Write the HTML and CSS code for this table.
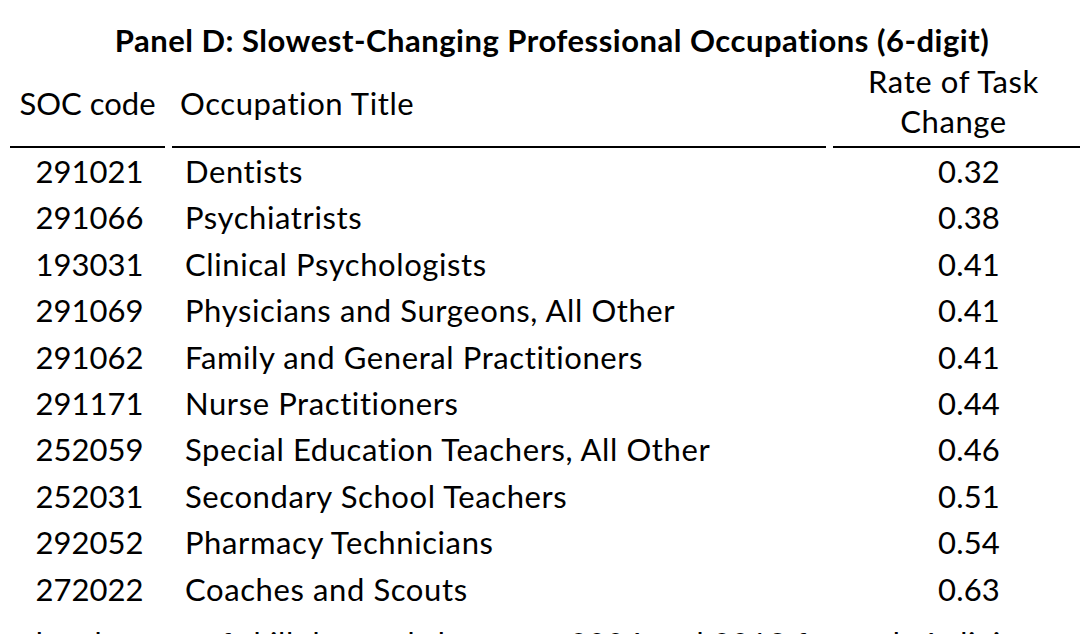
FILE: index.html
```html
<!DOCTYPE html>
<html lang="en">
<head>
<meta charset="utf-8">
<title>Panel D</title>
<link rel="stylesheet" href="styles.css">
</head>
<body>
<div class="panel">
  <h1 class="title">Panel D: Slowest-Changing Professional Occupations (6-digit)</h1>
  <div class="table">
    <div class="th th-code"><span>SOC code</span></div>
    <div class="th th-title"><span>Occupation Title</span></div>
    <div class="th th-rate"><span>Rate of Task</span><span>Change</span></div>

    <div class="td code">291021</div><div class="td name">Dentists</div><div class="td rate">0.32</div>
    <div class="td code">291066</div><div class="td name">Psychiatrists</div><div class="td rate">0.38</div>
    <div class="td code">193031</div><div class="td name">Clinical Psychologists</div><div class="td rate">0.41</div>
    <div class="td code">291069</div><div class="td name">Physicians and Surgeons, All Other</div><div class="td rate">0.41</div>
    <div class="td code">291062</div><div class="td name">Family and General Practitioners</div><div class="td rate">0.41</div>
    <div class="td code">291171</div><div class="td name">Nurse Practitioners</div><div class="td rate">0.44</div>
    <div class="td code">252059</div><div class="td name">Special Education Teachers, All Other</div><div class="td rate">0.46</div>
    <div class="td code">252031</div><div class="td name">Secondary School Teachers</div><div class="td rate">0.51</div>
    <div class="td code">292052</div><div class="td name">Pharmacy Technicians</div><div class="td rate">0.54</div>
    <div class="td code">272022</div><div class="td name">Coaches and Scouts</div><div class="td rate">0.63</div>
  </div>
  <p class="note">the changes of skill demands between 2006 and 2019 for each 6-digit occupation in the data</p>
</div>
</body>
</html>
```

FILE: styles.css
```css
html, body {
  margin: 0;
  padding: 0;
  background: #ffffff;
}
body {
  width: 1080px;
  height: 634px;
  overflow: hidden;
  font-family: Lato, "Open Sans", "Liberation Sans", sans-serif;
  font-size: 31px;
  letter-spacing: 0.6px;
  font-variant-ligatures: none;
  color: #000000;
}
.panel {
  padding-top: 22px;
}
.title {
  margin: 0;
  font-size: 31px;
  font-weight: 700;
  line-height: 36px;
  text-align: center;
  padding-left: 24px;
  letter-spacing: 0.5px;
}
.table {
  display: grid;
  grid-template-columns: 155px 654px 1fr;
  column-gap: 7px;
  margin-left: 10px;
  margin-top: 3px;
}
.th {
  border-bottom: 2px solid #000;
  padding-bottom: 5px;
  display: flex;
  flex-direction: column;
  justify-content: center;
  line-height: 40px;
}
.th-code {
  align-items: center;
  padding-top: 3px;
  letter-spacing: 0;
}
.th-title {
  padding-left: 8px;
  padding-top: 3px;
}
.th-rate {
  align-items: center;
  padding-right: 6px;
}
.td {
  line-height: 46.4px;
  white-space: nowrap;
}
.code {
  text-align: center;
  padding-left: 4px;
  letter-spacing: 0;
}
.name {
  padding-left: 13px;
}
.rate {
  text-align: center;
  padding-left: 25px;
  letter-spacing: 0.2px;
}
.note {
  margin: 8px 0 0 0;
  padding-left: 24px;
  line-height: 46.4px;
  white-space: nowrap;
}
```
